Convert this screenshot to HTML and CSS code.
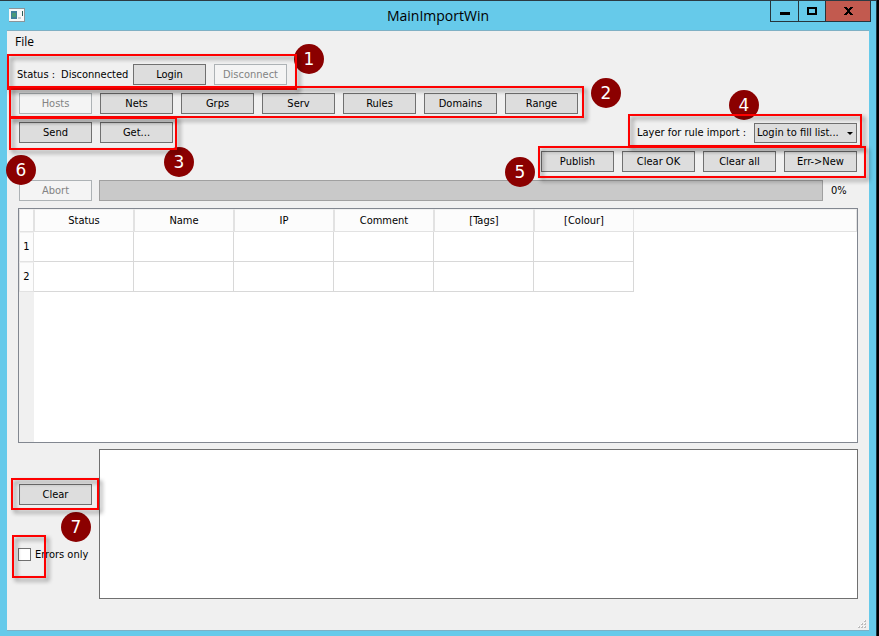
FILE: index.html
```html
<!DOCTYPE html>
<html lang="en">
<head>
<meta charset="utf-8">
<title>MainImportWin</title>
<link rel="stylesheet" href="styles.css">
</head>
<body>
<div class="window">
  <header class="titlebar">
    <svg class="app-icon" viewBox="0 0 16 14" aria-hidden="true">
      <rect x="0" y="0" width="16" height="14" fill="#8b9499"/>
      <rect x="0" y="1" width="15" height="12" fill="#f8f8f8"/>
      <rect x="2" y="3" width="6" height="8" fill="#3f7f9c"/>
      <rect x="3" y="5" width="4" height="4" fill="#4c9a78"/>
      <rect x="9" y="9" width="3" height="2" fill="#c9cdd0"/>
      <rect x="13" y="3" width="1" height="5" fill="#2b5f57"/>
    </svg>
    <h1 class="title">MainImportWin</h1>
    <div class="controls">
      <button class="control minimize" aria-label="Minimize"><svg width="10" height="10" viewBox="0 0 10 10"><path d="M0 6h10v3H0z"/></svg></button>
      <button class="control maximize" aria-label="Maximize"><svg width="10" height="10" viewBox="0 0 10 10"><path fill-rule="evenodd" d="M0 1h10v8H0zM2 3v4h6V3z"/></svg></button>
      <button class="control close" aria-label="Close"><svg width="9" height="8" viewBox="0 0 9 8"><path d="M0 0h3v1h1v1h1V1h1V0h3v1H8v1H7v1H6v2h1v1h1v1h1v1H6V7H5V6H4v1H3v1H0V7h1V6h1V5h1V3H2V2H1V1H0z"/></svg></button>
    </div>
  </header>

  <div class="client">
    <nav class="menubar"><button class="menu">File</button></nav>

    <main class="content">
      <div class="row">
        <div class="group">
          <span class="badge badge-1">1</span>
          <p class="status"><span>Status :</span><span>Disconnected</span></p>
          <button class="btn">Login</button>
          <button class="btn" disabled>Disconnect</button>
          <span class="mark mark-1"></span>
        </div>
      </div>

      <div class="row">
        <div class="group">
          <span class="badge badge-2">2</span>
          <button class="btn" disabled>Hosts</button>
          <button class="btn">Nets</button>
          <button class="btn">Grps</button>
          <button class="btn">Serv</button>
          <button class="btn">Rules</button>
          <button class="btn">Domains</button>
          <button class="btn">Range</button>
          <span class="mark mark-2"></span>
        </div>
      </div>

      <div class="row">
        <div class="group">
          <span class="badge badge-3">3</span>
          <button class="btn">Send</button>
          <button class="btn">Get...</button>
          <span class="mark mark-3"></span>
        </div>
        <div class="group end">
          <span class="badge badge-4">4</span>
          <label for="layer">Layer for rule import :</label>
          <span class="picker">
            <select id="layer"><option>Login to fill list...</option></select>
          </span>
          <span class="mark mark-4"></span>
        </div>
      </div>

      <div class="row">
        <div class="group end">
          <span class="badge badge-5">5</span>
          <button class="btn">Publish</button>
          <button class="btn">Clear OK</button>
          <button class="btn">Clear all</button>
          <button class="btn">Err-&gt;New</button>
          <span class="mark mark-5"></span>
        </div>
      </div>

      <div class="row">
        <div class="group wide">
          <span class="badge badge-6">6</span>
          <button class="btn" disabled>Abort</button>
          <div class="progress" role="progressbar" aria-label="Import" aria-valuenow="0" aria-valuemin="0" aria-valuemax="100"></div>
          <span class="percent">0%</span>
        </div>
      </div>

      <div class="grid">
        <table>
          <colgroup><col class="col-index"><col class="col"><col class="col"><col class="col"><col class="col"><col class="col"><col class="col"><col></colgroup>
          <thead>
            <tr><th></th><th>Status</th><th>Name</th><th>IP</th><th>Comment</th><th>[Tags]</th><th>[Colour]</th><th class="rest"></th></tr>
          </thead>
          <tbody>
            <tr><th>1</th><td></td><td></td><td></td><td></td><td></td><td></td></tr>
            <tr><th>2</th><td></td><td></td><td></td><td></td><td></td><td></td></tr>
          </tbody>
        </table>
      </div>

      <div class="log">
        <div class="log-side">
          <div class="group">
            <span class="badge badge-7">7</span>
            <button class="btn">Clear</button>
            <span class="mark mark-6"></span>
          </div>
          <div class="group">
            <label class="check"><input type="checkbox">Errors only</label>
            <span class="mark mark-7"></span>
          </div>
        </div>
        <textarea class="output" aria-label="Log"></textarea>
      </div>
    </main>

    <footer class="statusbar">
      <svg class="grip" width="9" height="9" viewBox="0 0 9 9" aria-hidden="true">
        <path fill="#bdbdbd" d="M6 0h2v2H6zM3 3h2v2H3zM6 3h2v2H6zM0 6h2v2H0zM3 6h2v2H3zM6 6h2v2H6z"/>
        <path fill="#fff" d="M6 0h1v1H6zM3 3h1v1H3zM6 3h1v1H6zM0 6h1v1H0zM3 6h1v1H3zM6 6h1v1H6z"/>
      </svg>
    </footer>
  </div>
</div>
</body>
</html>
```
FILE: styles.css
```css
* {
  box-sizing: border-box;
}

body {
  margin: 0;
  background: #000;
  color: #000;
  font: 11px/14px "DejaVu Sans Condensed", "DejaVu Sans", sans-serif;
}

button, select, textarea, input {
  font: inherit;
  color: inherit;
  margin: 0;
}

.window {
  display: flex;
  flex-direction: column;
  min-height: 100vh;
  margin-right: 2px;
  padding: 0 7px 5px;
  background: #66caea;
  border-top: 1px solid #2b3a42;
  border-right: 1px solid #1f3b45;
}

/* Title bar */

.titlebar {
  display: grid;
  grid-template-columns: 1fr auto 1fr;
  height: 29px;
}

.app-icon {
  width: 16px;
  height: 14px;
  margin: 7px 0 0 2px;
}

.title {
  margin: 0;
  font: 14px/29px "Open Sans", "Noto Sans", sans-serif;
}

.controls {
  display: flex;
  justify-self: end;
  height: 21px;
  margin-right: -2px;
  border: 1px solid #26343b;
  border-top: 0;
}

.control {
  display: flex;
  align-items: center;
  justify-content: center;
  width: 27px;
  padding: 0;
  border: 0;
  background: none;
}

.control + .control {
  border-left: 1px solid #26343b;
}

.controls .close {
  width: 45px;
  background: #c25a4f;
}

/* Client area */

.client {
  display: flex;
  flex: 1;
  flex-direction: column;
  background: #f0f0f0;
  border-top: 1px solid #7fb0c4;
  border-bottom: 1px solid #7fb0c4;
}

.menubar {
  height: 22px;
}

.menu {
  height: 22px;
  padding: 0 8px;
  border: 0;
  background: none;
  font: 12px/22px "Open Sans", "Noto Sans", sans-serif;
}

.content {
  display: flex;
  flex: 1;
  flex-direction: column;
  gap: 8px;
  padding: 11px 11px 0;
}

.row {
  display: flex;
  height: 21px;
  padding: 0 1px;
}

.group {
  position: relative;
  display: flex;
  align-items: center;
  gap: 8px;
}

.end {
  margin-left: auto;
}

.wide {
  flex: 1;
}

.status {
  display: flex;
  gap: 6px;
  width: 108px;
  margin: 0 0 0 -2px;
  padding-top: 1px;
  white-space: nowrap;
}

.btn {
  width: 73px;
  height: 21px;
  padding: 0;
  border: 1px solid #707070;
  background: #dddddd;
}

.btn:disabled {
  border-color: #adb2b5;
  background: #f4f4f4;
  color: #838383;
}

.picker {
  position: relative;
  display: flex;
}

.picker::after {
  content: "";
  position: absolute;
  top: 9px;
  right: 4px;
  border: 3px solid transparent;
  border-top-color: #000;
  border-bottom: 0;
  pointer-events: none;
}

select {
  appearance: none;
  width: 103px;
  height: 20px;
  padding: 0 0 0 2px;
  border: 1px solid #707070;
  border-radius: 0;
  background: #dddddd;
}

.progress {
  flex: 1;
  height: 21px;
  margin-left: -1px;
  border: 1px solid #a0a0a0;
  background: #c9c9c9;
}

.percent {
  width: 26px;
}

/* Data table */

.grid {
  flex: 1;
  min-height: 100px;
  margin-top: -1px;
  border: 1px solid #828790;
  background: linear-gradient(90deg, #f0f0f0 15px, #fff 15px);
}

table {
  width: 100%;
  table-layout: fixed;
  border-collapse: separate;
  border-spacing: 0;
}

.col-index {
  width: 15px;
}

.col {
  width: 100px;
}

th {
  height: 23px;
  padding: 0;
  border: 1px solid #e2e2e2;
  border-top-color: #f0f0f0;
  background: #fcfcfc;
  font-weight: normal;
}

.rest {
  border-left: 0;
}

tbody th,
td {
  height: 30px;
}

td {
  padding: 0;
  border: solid #d8d8d8;
  border-width: 0 1px 1px 0;
  background: #fff;
}

/* Log */

.log {
  display: flex;
  height: 150px;
  margin-top: -2px;
}

.log-side {
  display: flex;
  flex-direction: column;
  gap: 43px;
  width: 81px;
  padding: 35px 0 0 1px;
}

.check {
  display: flex;
  align-items: center;
  gap: 4px;
  height: 13px;
  margin-left: -1px;
  white-space: nowrap;
}

.check input {
  appearance: none;
  width: 13px;
  height: 13px;
  border: 1px solid #707070;
  background: #fff;
}

.output {
  flex: 1;
  resize: none;
  border: 1px solid #707070;
  border-radius: 0;
  background: #fff;
}

.statusbar {
  display: flex;
  align-items: flex-end;
  justify-content: flex-end;
  height: 31px;
  padding: 0 2px 1px;
}

/* Callouts */

.mark {
  position: absolute;
  z-index: 2;
  border: 2px solid #fe0000;
  filter: drop-shadow(3px 3px 2px rgba(0, 0, 0, 0.45));
  pointer-events: none;
}

.mark-1 { inset: -10px -10px -5px -12px; }
.mark-2 { inset: -7px -6px -4px -10px; }
.mark-3 { inset: -5px -4px -7px -10px; }
.mark-4 { inset: -8px -5px -4px -9px; }
.mark-5 { inset: -5px -9px -6px -3px; }
.mark-6 { inset: -6px 0 -5px -8px; }
.mark-7 { top: -13px; bottom: -17px; left: -7px; width: 34px; }

.badge {
  position: absolute;
  z-index: 1;
  width: 30px;
  height: 30px;
  border-radius: 50%;
  background: #8b0000;
  color: #fff;
  font: 17px/30px "DejaVu Sans", sans-serif;
  text-align: center;
}

.badge-1 { top: -20px; right: -37px; }
.badge-2 { top: -15px; right: -43px; }
.badge-3 { top: 25px; right: -21px; }
.badge-4 { top: -32px; right: 98px; }
.badge-5 { top: 6px; left: -36px; }
.badge-6 { top: -25px; left: -13px; }
.badge-7 { top: 28px; left: 42px; }
```
